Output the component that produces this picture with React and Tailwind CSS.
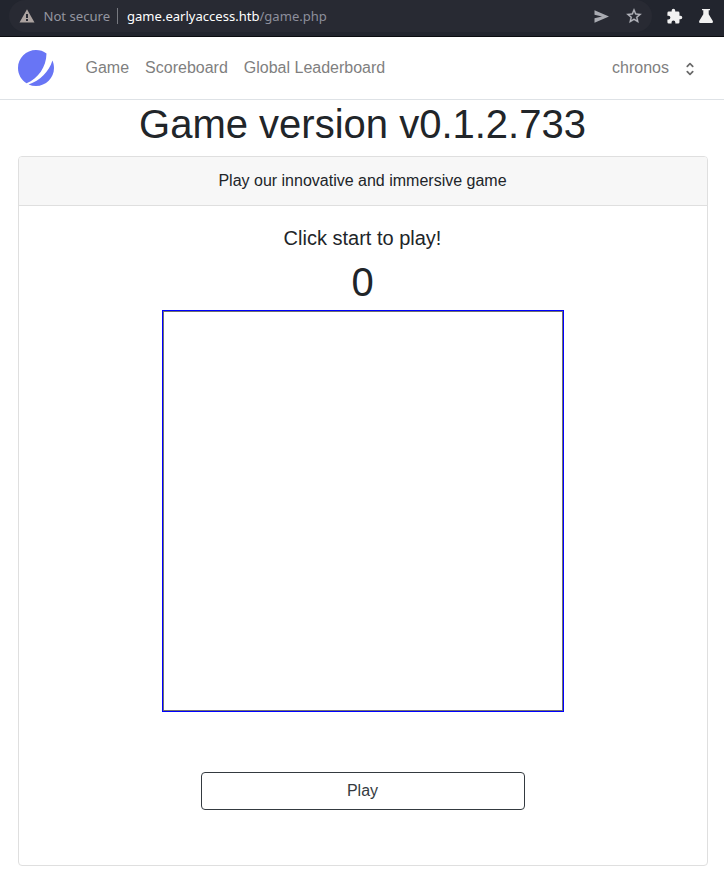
import React from "react";

function AddressBar() {
  return (
    <header className="flex h-[37px] items-start border-b border-[#0b0c10] bg-[#22252e] font-['Noto_Sans',sans-serif] text-[13px]">
      <div className="ml-[9px] flex h-8 w-[643px] items-center rounded-r-full rounded-l-full bg-[#282a33]">
        <svg className="ml-[10px] h-[14px] w-4" viewBox="0 0 16 14">
          <path fill="#aca3a0" fillRule="evenodd" d="M8 0.3 15.5 13.5H0.5ZM7 5v4h2V5ZM7 10v2h2v-2Z" />
        </svg>
        <span className="ml-2 w-[74px] whitespace-nowrap pt-[2px] pl-[0.5px] text-[13.1px] text-[#9496a0]">Not secure</span>
        <span className="h-4 w-px bg-[#777980]" />
        <span className="ml-[9px] whitespace-nowrap pt-[2px] text-[13.05px] text-[#8d8f9c]">
          <span className="text-white">game.earlyaccess.htb</span>/game.php
        </span>
        <svg className="mr-[16px] ml-auto h-[13px] w-[15px]" viewBox="0 0 15 13">
          <path fill="#a9abb2" d="M0.5 0.3 15 6.5 0.5 12.7V8.2L8 6.5 0.5 4.8Z" />
        </svg>
        <svg className="mr-[9px] h-[18px] w-[18px]" viewBox="0 0 24 24">
          <path fill="#b5b6bd" stroke="#b5b6bd" strokeWidth="0.4" d="m22 9.24-7.19-.62L12 2 9.19 8.63 2 9.24l5.46 4.73L5.82 21 12 17.27 18.18 21l-1.63-7.03zM12 15.4l-3.76 2.27 1-4.28-3.32-2.88 4.38-.38L12 6.1l1.71 4.04 4.38.38-3.32 2.88 1 4.28z" />
        </svg>
      </div>
      <div className="flex h-8 items-center">
        <svg className="ml-[13.5px] h-[17px] w-[17px]" viewBox="0 0 24 24">
          <path fill="#f1f1f1" d="M20.5 11H19V7a2 2 0 0 0-2-2h-4V3.5a2.5 2.5 0 0 0-5 0V5H4a2 2 0 0 0-2 2v3.8h1.5a2.7 2.7 0 0 1 0 5.4H2V20a2 2 0 0 0 2 2h3.8v-1.5a2.7 2.7 0 0 1 5.4 0V22H17a2 2 0 0 0 2-2v-4h1.5a2.5 2.5 0 0 0 0-5z" />
        </svg>
        <svg className="ml-[16.5px] h-[14px] w-[14px]" viewBox="0 0 14 14">
          <path fill="#f1f1f1" d="M3 0h8v1.3H9.7v4L13.8 12q.5 2-1 2H1.2q-1.5 0-1-2L4.3 5.3v-4H3Z" />
        </svg>
      </div>
    </header>
  );
}

function NavBar() {
  return (
    <nav className="flex h-[63px] items-center border-b border-[#dee2e6] pr-[25px] pl-[18px] text-[#7f7f7f]">
      <svg className="h-9 w-9" viewBox="0 0 48 48">
        <path fill="#6875f5" d="M11.395 44.428C4.557 40.198 0 32.632 0 24 0 10.745 10.745 0 24 0a23.891 23.891 0 0 1 13.997 4.502c-.2 17.907-11.097 33.245-26.602 39.926z" />
        <path fill="#6875f5" d="M14.134 45.885A23.914 23.914 0 0 0 24 48c13.255 0 24-10.745 24-24 0-3.516-.756-6.856-2.115-9.866-4.659 15.143-16.608 27.092-31.75 31.751z" />
      </svg>
      <div className="ml-[31.5px] flex gap-4">
        <a>Game</a>
        <a>Scoreboard</a>
        <a>Global Leaderboard</a>
      </div>
      <button className="ml-auto flex items-center gap-[12px]">
        chronos
        <svg className="mt-[2px] h-[18px] w-[18px]" viewBox="0 0 20 20" fill="#6a6a6a">
          <path fillRule="evenodd" d="M10 3a1 1 0 0 1 .707.293l3 3a1 1 0 0 1-1.414 1.414L10 5.414 7.707 7.707a1 1 0 0 1-1.414-1.414l3-3A1 1 0 0 1 10 3zm-3.707 9.293a1 1 0 0 1 1.414 0L10 14.586l2.293-2.293a1 1 0 0 1 1.414 1.414l-3 3a1 1 0 0 1-1.414 0l-3-3a1 1 0 0 1 0-1.414z" />
        </svg>
      </button>
    </nav>
  );
}

export default function App() {
  return (
    <div className="h-[875px] w-[724px] overflow-hidden bg-white font-['Liberation_Sans',Arial,sans-serif] text-base text-[#212529]">
      <AddressBar />
      <NavBar />
      <main className="pr-4 pl-[18px] text-center">
        <h1 className="pr-px text-[40px] leading-[48px]">Game version v0.1.2.733</h1>
        <section className="mt-2 h-[710px] overflow-hidden rounded border border-[#dfdfdf]">
          <div className="border-b border-[#dfdfdf] bg-[#f7f7f7] py-3 pr-px">Play our innovative and immersive game</div>
          <div className="flex flex-col items-center pt-5">
            <h5 className="pr-px text-xl leading-6">Click start to play!</h5>
            <div className="mt-2 pr-px text-[40px] leading-[48px]">0</div>
            <div className="mt-1 h-[402px] w-[402px] border border-[#0000ff]">
              <div className="h-full border border-[#707070]" />
            </div>
            <button className="mt-[60px] h-[38px] w-[324px] rounded border border-[#343a40] pr-px text-[#343a40]">Play</button>
          </div>
        </section>
      </main>
    </div>
  );
}
